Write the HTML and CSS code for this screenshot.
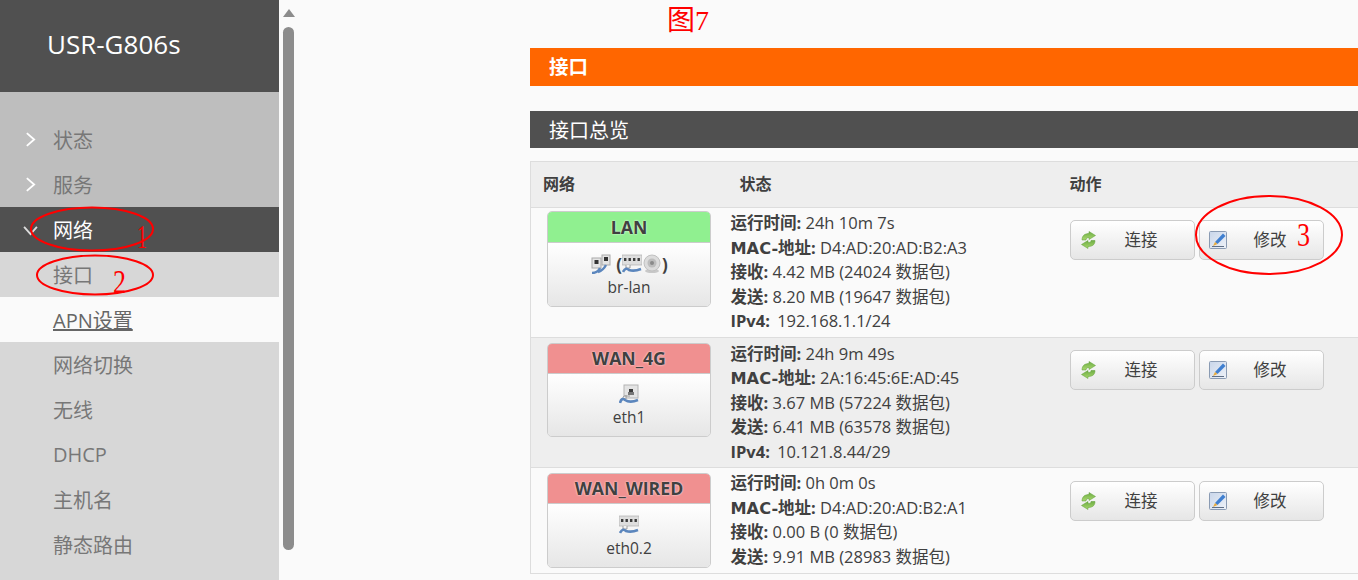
FILE: index.html
```html
<!DOCTYPE html>
<html lang="en">
<head>
    <meta charset="UTF-8">
    <meta name="viewport" content="width=device-width, initial-scale=1.0">
    <title>USR-G806s - 接口</title>
    <link rel="stylesheet" href="styles.css">
</head>
<body>
    <svg class="icon-defs" width="0" height="0">
        <defs>
            <linearGradient id="g-green" x1="0" y1="0" x2="0" y2="1">
                <stop offset="0" stop-color="#6fae45"/>
                <stop offset="1" stop-color="#a9d86e"/>
            </linearGradient>
            <linearGradient id="g-paper" x1="0" y1="0" x2="1" y2="1">
                <stop offset="0" stop-color="#c9d6ea"/>
                <stop offset="1" stop-color="#eef2f8"/>
            </linearGradient>
        </defs>
        <symbol id="i-eth" viewBox="0 0 20 20">
            <rect x="5" y="1" width="14" height="13" fill="#e4e4e4" stroke="#b4b4b4"/>
            <rect x="10" y="5" width="4" height="4" fill="#3c3c3c"/>
            <rect x="9" y="8" width="6" height="3" fill="#777"/>
            <path d="M11 12 L5 12 L3 15 L7 15 L7 11" fill="#f2f2f2" stroke="#8a8a8a" stroke-width=".8"/>
            <path d="M1 19 C2 15 4 14 6 16 C9 18 14 18 19 16" fill="none" stroke="#5b86bd" stroke-width="2.6"/>
        </symbol>
        <symbol id="i-bridge" viewBox="0 0 20 20">
            <rect x="1" y="4" width="9" height="10" fill="#e4e4e4" stroke="#aaa"/>
            <rect x="11" y="1" width="8" height="10" fill="#e4e4e4" stroke="#aaa"/>
            <rect x="3.5" y="6" width="4" height="4" fill="#333"/>
            <rect x="13" y="3" width="4" height="4" fill="#333"/>
            <path d="M1 19 C4 19 7 18 9 14 M7 18 C10 17 13 15 15 11" fill="none" stroke="#5b86bd" stroke-width="2.4"/>
        </symbol>
        <symbol id="i-switch" viewBox="0 0 20 20">
            <rect x="0" y="1" width="20" height="10" fill="#dedede" stroke="#b0b0b0" stroke-width=".7"/>
            <path d="M2 4h2.4v3h-2.4zM6.5 4h2.4v3h-2.4zM11 4h2.4v3h-2.4zM15.5 4h2.4v3h-2.4z" fill="#3c3c3c"/>
            <path d="M4 11 L4 14 L8 14 L8 11" fill="#f2f2f2" stroke="#8a8a8a" stroke-width=".8"/>
            <path d="M1 18 C3 14 5 14 7 16 C10 17 14 17 19 15" fill="none" stroke="#5b86bd" stroke-width="2.6"/>
        </symbol>
        <symbol id="i-wifi" viewBox="0 0 20 20">
            <ellipse cx="10" cy="17" rx="7" ry="2" fill="#c8c8c8"/>
            <circle cx="10" cy="9" r="8" fill="#dcdcdc" stroke="#c0c0c0"/>
            <circle cx="10" cy="9" r="4.5" fill="#bdbdbd"/>
            <circle cx="10" cy="9" r="2" fill="#8a8a8a"/>
        </symbol>
        <symbol id="i-reload" viewBox="0 0 15 18">
            <path d="M1 9 C1 4.5 4 2.5 8 2.5 L8 .5 L14.5 4.5 L8 8.5 L8 6.5 C6 6.5 5 7.5 5 9 Z" fill="url(#g-green)" stroke="#5d9c34" stroke-width=".5"/>
            <path d="M14 9.5 C14 14 11 15.5 7 15.5 L7 17.5 L.5 13.5 L7 9.5 L7 11.5 C9 11.5 10 11 10 9.5 Z" fill="url(#g-green)" stroke="#5d9c34" stroke-width=".5"/>
        </symbol>
        <symbol id="i-edit" viewBox="0 0 18 18">
            <rect x=".5" y=".5" width="17" height="17" rx="1" fill="url(#g-paper)" stroke="#8a9bb3"/>
            <path d="M6 11 L14 2.5 L16.5 5 L8.5 13 Z" fill="#3f7fd0"/>
            <path d="M6 11 L8.5 13 L4 15 Z" fill="#e8a93a"/>
            <path d="M3 15.5 H15" stroke="#5f6f86"/>
        </symbol>
    </svg>

    <div class="page">
        <aside class="sidebar">
            <div class="brand">USR-G806s</div>
            <nav class="menu">
                <a class="menu-item"><svg class="chevron" viewBox="0 0 12 16"><path d="M2 1 L10 8 L2 15"/></svg>状态</a>
                <a class="menu-item"><svg class="chevron" viewBox="0 0 12 16"><path d="M2 1 L10 8 L2 15"/></svg>服务</a>
                <a class="menu-item active"><svg class="chevron down" viewBox="0 0 16 12"><path d="M1 2 L8 10 L15 2"/></svg>网络</a>
                <div class="submenu">
                    <a class="sub-item">接口</a>
                    <a class="sub-item current">APN设置</a>
                    <a class="sub-item">网络切换</a>
                    <a class="sub-item">无线</a>
                    <a class="sub-item">DHCP</a>
                    <a class="sub-item">主机名</a>
                    <a class="sub-item">静态路由</a>
                </div>
            </nav>
        </aside>

        <div class="scrollbar">
            <div class="scroll-arrow"></div>
            <div class="scroll-thumb"></div>
        </div>

        <main class="content">
            <div class="figure-label">图7</div>
            <h2 class="page-title">接口</h2>
            <h3 class="section-title">接口总览</h3>

            <table class="iface-table">
                <thead>
                    <tr>
                        <th class="col-net">网络</th>
                        <th class="col-status">状态</th>
                        <th class="col-action">动作</th>
                    </tr>
                </thead>
                <tbody>
                    <tr class="row-lan">
                        <td>
                            <div class="badge">
                                <div class="badge-head up">LAN</div>
                                <div class="badge-body">
                                    <div class="badge-icons">
                                        <svg class="dev-icon"><use href="#i-bridge"/></svg>
                                        <span class="paren">(</span><svg class="dev-icon"><use href="#i-switch"/></svg><svg class="dev-icon"><use href="#i-wifi"/></svg><span class="paren">)</span>
                                    </div>
                                    <div class="dev-name">br-lan</div>
                                </div>
                            </div>
                        </td>
                        <td class="status">
                            <div><b>运行时间:</b> 24h 10m 7s</div>
                            <div><b><span class="lat">MAC-</span>地址:</b> D4:AD:20:AD:B2:A3</div>
                            <div><b>接收:</b> 4.42 MB (24024 数据包)</div>
                            <div><b>发送:</b> 8.20 MB (19647 数据包)</div>
                            <div><b class="lat-ip">IPv4:</b> 192.168.1.1/24</div>
                        </td>
                        <td>
                            <div class="actions">
                                <a class="btn"><svg class="btn-icon"><use href="#i-reload"/></svg>连接</a>
                                <a class="btn"><svg class="btn-icon edit"><use href="#i-edit"/></svg>修改</a>
                            </div>
                        </td>
                    </tr>
                    <tr class="row-alt">
                        <td>
                            <div class="badge">
                                <div class="badge-head down">WAN_4G</div>
                                <div class="badge-body">
                                    <div class="badge-icons"><svg class="dev-icon"><use href="#i-eth"/></svg></div>
                                    <div class="dev-name">eth1</div>
                                </div>
                            </div>
                        </td>
                        <td class="status">
                            <div><b>运行时间:</b> 24h 9m 49s</div>
                            <div><b><span class="lat">MAC-</span>地址:</b> 2A:16:45:6E:AD:45</div>
                            <div><b>接收:</b> 3.67 MB (57224 数据包)</div>
                            <div><b>发送:</b> 6.41 MB (63578 数据包)</div>
                            <div><b class="lat-ip">IPv4:</b> 10.121.8.44/29</div>
                        </td>
                        <td>
                            <div class="actions">
                                <a class="btn"><svg class="btn-icon"><use href="#i-reload"/></svg>连接</a>
                                <a class="btn"><svg class="btn-icon edit"><use href="#i-edit"/></svg>修改</a>
                            </div>
                        </td>
                    </tr>
                    <tr class="row-wired">
                        <td>
                            <div class="badge">
                                <div class="badge-head down">WAN_WIRED</div>
                                <div class="badge-body">
                                    <div class="badge-icons"><svg class="dev-icon"><use href="#i-switch"/></svg></div>
                                    <div class="dev-name">eth0.2</div>
                                </div>
                            </div>
                        </td>
                        <td class="status">
                            <div><b>运行时间:</b> 0h 0m 0s</div>
                            <div><b><span class="lat">MAC-</span>地址:</b> D4:AD:20:AD:B2:A1</div>
                            <div><b>接收:</b> 0.00 B (0 数据包)</div>
                            <div><b>发送:</b> 9.91 MB (28983 数据包)</div>
                        </td>
                        <td>
                            <div class="actions">
                                <a class="btn"><svg class="btn-icon"><use href="#i-reload"/></svg>连接</a>
                                <a class="btn"><svg class="btn-icon edit"><use href="#i-edit"/></svg>修改</a>
                            </div>
                        </td>
                    </tr>
                </tbody>
            </table>
        </main>
    </div>

    <!-- red pen marks drawn over the screenshot -->
    <svg class="marks" width="1358" height="580">
        <ellipse cx="92" cy="229" rx="61" ry="21.5"/>
        <ellipse cx="95" cy="275" rx="58" ry="19.5"/>
        <ellipse cx="1269" cy="235" rx="73" ry="39"/>
        <text x="137" y="248" class="mark-num" textLength="10" lengthAdjust="spacingAndGlyphs">1</text>
        <text x="113" y="293" class="mark-num" textLength="13" lengthAdjust="spacingAndGlyphs">2</text>
        <text x="1297" y="246" class="mark-num" textLength="13" lengthAdjust="spacingAndGlyphs">3</text>
    </svg>
</body>
</html>
```

FILE: styles.css
```css
* {
    box-sizing: border-box;
}
html, body {
    margin: 0;
    height: 580px;
    overflow: hidden;
}
body {
    background-color: #fafafa;
    color: #404040;
    font-family: "Open Sans", "Noto Sans CJK SC", sans-serif;
    font-size: 16.5px;
}
.icon-defs {
    position: absolute;
}
.page {
    display: flex;
    height: 580px;
}

/* sidebar */
.sidebar {
    width: 279px;
    flex: none;
    background: #d7d7d7;
}
.brand {
    height: 92px;
    padding: 25px 0 0 47px;
    background: #505050;
    color: #fff;
    font-size: 26px;
    line-height: 38px;
}
.menu {
    background: #bebebe;
    padding-top: 25px;
}
.menu-item, .sub-item {
    display: flex;
    align-items: center;
    height: 45px;
    padding-left: 53px;
    font-size: 20px;
    color: #777;
    position: relative;
}
.menu-item.active {
    background: #505050;
    color: #fff;
}
.chevron {
    position: absolute;
    left: 25px;
    top: 15px;
    width: 11px;
    height: 15px;
    fill: none;
    stroke: #fff;
    stroke-width: 2;
}
.chevron.down {
    left: 23px;
    top: 18px;
    width: 15px;
    height: 11px;
    stroke: #ddd;
}
.submenu {
    background: #d7d7d7;
}
.sub-item.current {
    background: #fafafa;
    color: #666;
    text-decoration: underline;
}

/* scrollbar */
.scrollbar {
    width: 19px;
    flex: none;
    padding: 9px 0 0 4px;
}
.scroll-arrow {
    width: 0;
    height: 0;
    border-left: 6.5px solid transparent;
    border-right: 6.5px solid transparent;
    border-bottom: 8px solid #8c8c8c;
    margin-bottom: 10px;
}
.scroll-thumb {
    width: 11px;
    height: 523px;
    border-radius: 6px;
    background: #8c8c8c;
}

/* main */
.content {
    flex: 1;
    min-width: 0;
    padding-left: 232px;
}
.figure-label {
    height: 48px;
    padding: 1px 0 0 137px;
    color: #f00;
    font-family: "Liberation Serif", "Noto Sans CJK SC", serif;
    font-size: 28px;
    line-height: 40px;
}
.page-title {
    margin: 0 0 25px;
    height: 38px;
    padding-left: 19px;
    background: #f60;
    color: #fff;
    font-size: 19.5px;
    font-weight: bold;
    line-height: 38px;
}
.section-title {
    margin: 0 0 13px;
    height: 37px;
    padding-left: 19px;
    background: #505050;
    color: #fff;
    font-size: 20px;
    font-weight: normal;
    line-height: 40px;
}

/* interface table */
.iface-table {
    width: 828px;
    table-layout: fixed;
    border-collapse: collapse;
    border-spacing: 0;
    border-left: 1px solid #ddd;
    border-top: 1px solid #ddd;
}
.iface-table th {
    height: 46px;
    padding: 0 0 4px;
    background: #eee;
    border-bottom: 1px solid #ddd;
    text-align: left;
    font-size: 16px;
}
.col-net {
    width: 200px;
    padding-left: 12px !important;
}
.col-status {
    width: 339px;
    padding-left: 9px !important;
}
.iface-table td {
    padding: 0;
    vertical-align: top;
    border-bottom: 1px solid #ddd;
}
.row-lan td {
    height: 130px;
}
.row-alt td {
    height: 130px;
    background: #eee;
}
.row-wired td {
    height: 106px;
}
.badge {
    width: 164px;
    margin: 3px 0 0 16px;
    border: 1px solid #ccc;
    border-radius: 5px;
    overflow: hidden;
    text-align: center;
}
.row-alt .badge, .row-wired .badge {
    margin-top: 5px;
}
.badge-head {
    height: 30px;
    border-bottom: 1px solid #ccc;
    font-weight: bold;
    font-size: 17.7px;
    line-height: 29px;
    text-shadow: 0 0 2px #fff;
}
.row-lan .badge-head {
    height: 31px;
    line-height: 30px;
}
.badge-head.up {
    background: #90f090;
}
.badge-head.down {
    background: #f09090;
}
.badge-body {
    height: 63px;
    background: linear-gradient(#fff, #e6e6e6);
    padding-top: 9px;
}
.row-alt .badge-body {
    height: 62px;
    padding-top: 8px;
}
.badge-icons {
    display: flex;
    justify-content: center;
    align-items: center;
    height: 24px;
}
.dev-icon {
    width: 20px;
    height: 20px;
    flex: none;
}
.paren {
    font-size: 17px;
    font-weight: bold;
    margin-left: 5px;
}
.paren:last-child {
    margin-left: 0;
    margin-right: -1px;
}
.dev-name {
    padding-top: 1px;
    font-size: 15.5px;
    line-height: 21px;
}
.status {
    padding: 3px 0 0 0 !important;
    line-height: 24.6px;
}
.row-alt .status {
    padding-top: 4px !important;
    line-height: 24.4px;
}
/* bold latin in the labels runs wider than Open Sans */
.lat {
    font-family: "DejaVu Sans", sans-serif;
    font-size: 16.2px;
    line-height: 0;
}
.lat-ip {
    margin-right: 3px;
}
.actions {
    display: flex;
    gap: 4px;
    margin-top: 12px;
}
.row-wired .actions {
    margin-top: 13px;
}
.btn {
    display: block;
    position: relative;
    width: 125px;
    height: 40px;
    padding-left: 18px;
    border: 1px solid #ccc;
    border-radius: 5px;
    background: linear-gradient(#fff, #e6e6e6);
    text-align: center;
    line-height: 38px;
}
.btn-icon {
    position: absolute;
    left: 10px;
    top: 10px;
    width: 15px;
    height: 18px;
}
.btn-icon.edit {
    left: 9px;
    width: 18px;
    height: 18px;
}

/* pen marks */
.marks {
    position: absolute;
    left: 0;
    top: 0;
    pointer-events: none;
}
.marks ellipse {
    fill: none;
    stroke: #f00;
    stroke-width: 2;
}
.mark-num {
    fill: #f00;
    font-family: "Liberation Serif", serif;
    font-size: 34px;
}
```
